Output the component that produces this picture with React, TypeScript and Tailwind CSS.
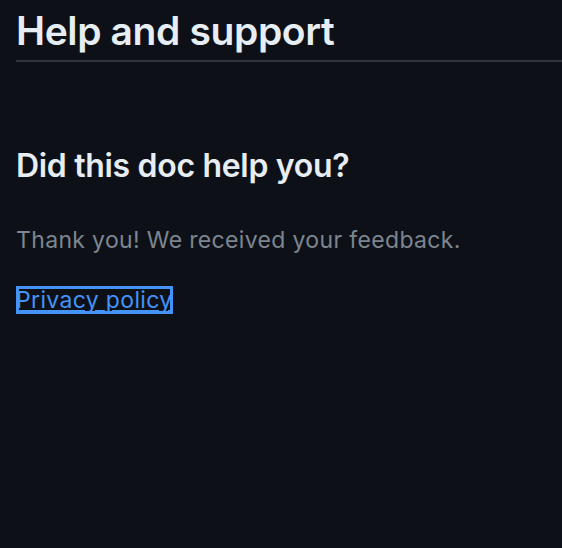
import React from 'react';

// Feedback section – dark docs theme
const App: React.FC = () => {
  return (
    <div className="min-h-[548px] w-full bg-[#0d1117] font-['Inter','Liberation_Sans',sans-serif] text-[#e6edf3]">
      <div className="pl-4 pt-[6px]">
        {/* Section title */}
        <h1 className="border-b-2 border-[#30363d] pb-1 text-[39px] font-semibold leading-[50px] tracking-[-0.01em]">
          Help and support
        </h1>

        {/* Feedback block */}
        <div className="mt-[84px]">
          <h2 className="text-[32px] font-semibold leading-[40px] tracking-[-0.01em]">Did this doc help you?</h2>
          <p className="mt-[39px] text-[23px] leading-[30px] tracking-[0.015em] text-[#7d8590]">
            Thank you! We received your feedback.
          </p>
          <p className="mt-[30px] text-[23px] leading-[30px] tracking-[0.015em]">
            <a
              href="#"
              className="text-[#4493f8] underline underline-offset-2 outline-[3px] outline-offset-[-3px] outline-[#4493f8] outline-solid"
            >
              Privacy policy
            </a>
          </p>
        </div>
      </div>
    </div>
  );
};

export default App;
